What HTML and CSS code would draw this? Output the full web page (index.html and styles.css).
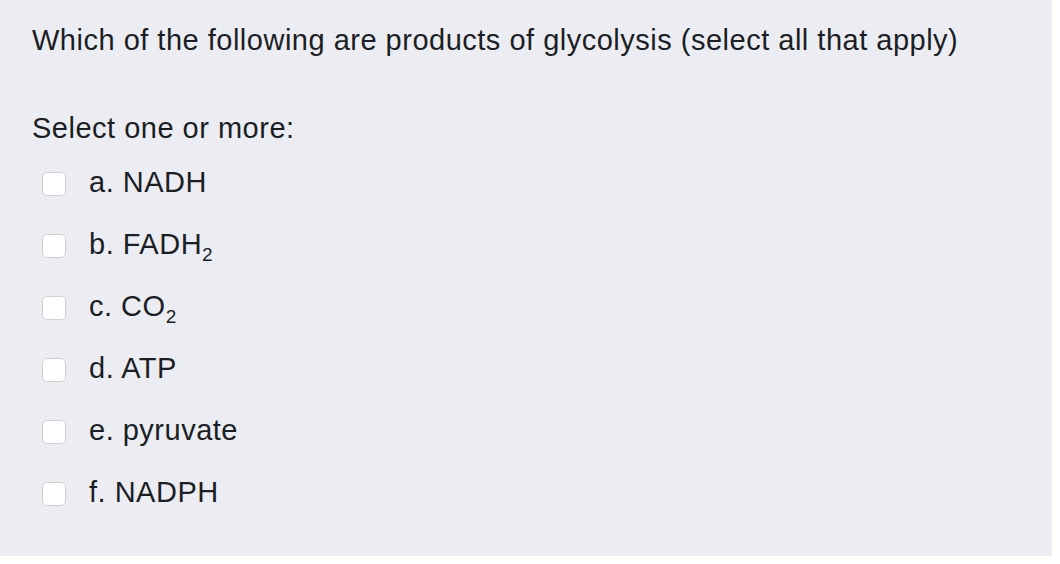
FILE: index.html
```html
<!DOCTYPE html>
<html>
<head>
<meta charset="utf-8">
<link rel="stylesheet" href="styles.css">
</head>
<body>
<div class="panel">
  <div class="question">Which of the following are products of glycolysis (select all that apply)</div>
  <div class="prompt">Select one or more:</div>
  <div class="options">
    <label class="option"><span class="box"></span><span class="label">a. NADH</span></label>
    <label class="option"><span class="box"></span><span class="label">b. FADH<sub>2</sub></span></label>
    <label class="option"><span class="box"></span><span class="label">c. CO<sub>2</sub></span></label>
    <label class="option"><span class="box"></span><span class="label">d. ATP</span></label>
    <label class="option"><span class="box"></span><span class="label">e. pyruvate</span></label>
    <label class="option"><span class="box"></span><span class="label">f. NADPH</span></label>
  </div>
</div>
</body>
</html>
```

FILE: styles.css
```css
html, body {
  margin: 0;
  padding: 0;
  background: #ffffff;
}
body {
  font-family: "Liberation Sans", Arial, Helvetica, sans-serif;
  color: #1b1e24;
}
.panel {
  width: 1052px;
  height: 556px;
  box-sizing: border-box;
  background: #ecedf2;
  padding: 22px 0 0 32px;
}
.question,
.prompt,
.label {
  font-size: 29px;
  line-height: 36px;
  letter-spacing: 0.5px;
}
.prompt {
  margin-top: 52px;
}
.options {
  margin-top: 18px;
  display: flex;
  flex-direction: column;
  gap: 26px;
}
.option {
  display: flex;
  align-items: flex-start;
}
.box {
  width: 22px;
  height: 22px;
  margin: 8px 23px 0 10px;
  background: #ffffff;
  border: 1px solid #cfcfd4;
  border-radius: 5px;
  flex: none;
}
.label sub {
  font-size: 19px;
  line-height: 0;
  vertical-align: -7px;
  letter-spacing: 0;
}
```
